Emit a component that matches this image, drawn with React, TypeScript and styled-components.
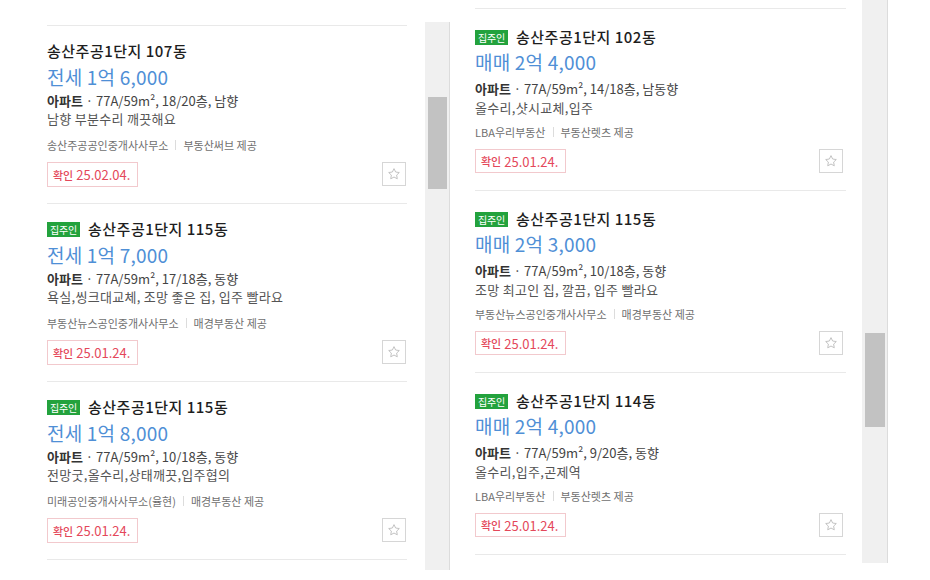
import React from "react";
import styled, { createGlobalStyle, ThemeProvider } from "styled-components";

const Global = createGlobalStyle`
  html, body { margin: 0; padding: 0; background: #fff; }
  body { font-family: "Noto Sans CJK KR", "Noto Sans", sans-serif; color: #222; }
  * { box-sizing: border-box; }
`;

type Metrics = {
  padTop: number;
  titleLh: number;
  priceGap: number;
  descGap: number;
  descLh: number;
  agentGap: number;
  footGap: number;
  boxH: number;
  padBottom: number;
  itemW: number;
  starInset: number;
};

const leftMetrics: Metrics = {
  padTop: 15, titleLh: 20, priceGap: 3, descGap: 2, descLh: 18,
  agentGap: 9, footGap: 9, boxH: 25, padBottom: 16, itemW: 360, starInset: 1,
};
const rightMetrics: Metrics = {
  padTop: 18, titleLh: 20, priceGap: 2, descGap: 4, descLh: 19,
  agentGap: 7, footGap: 9, boxH: 24, padBottom: 17, itemW: 371, starInset: 3,
};

declare module "styled-components" {
  export interface DefaultTheme { m: Metrics }
}

const Page = styled.div`
  display: flex;
  align-items: flex-start;
  width: 930px;
  height: 580px;
  overflow: hidden;
  background: #fff;
`;

const Pane = styled.section<{ $top: number; $h: number; $padLeft: number; $gap: number }>`
  display: flex;
  align-items: stretch;
  margin-top: ${(p) => p.$top}px;
  height: ${(p) => p.$h}px;
  padding-left: ${(p) => p.$padLeft}px;
  gap: ${(p) => p.$gap}px;
`;

const List = styled.ul<{ $padTop: number }>`
  list-style: none;
  margin: 0;
  padding: ${(p) => p.$padTop}px 0 0;
  width: ${(p) => p.theme.m.itemW}px;
  overflow: hidden;
`;

const ListEnd = styled.li`
  border-top: 1px solid #e9e9e9;
  height: 1px;
`;

const Item = styled.li`
  border-top: 1px solid #e9e9e9;
  padding: ${(p) => p.theme.m.padTop}px 0 ${(p) => p.theme.m.padBottom}px;
  display: flex;
  flex-direction: column;
`;

const TitleRow = styled.div`
  display: flex;
  align-items: center;
  gap: 8px;
  height: ${(p) => p.theme.m.titleLh}px;
`;

const OwnerTag = styled.span`
  display: inline-flex;
  align-items: center;
  justify-content: center;
  height: 15px;
  padding: 0 3px;
  background: #23a23d;
  color: #fff;
  font-size: 10px;
  line-height: 15px;
  letter-spacing: -0.2px;
`;

const Title = styled.h3`
  margin: 0;
  font-size: 15px;
  font-weight: 500;
  color: #1e1e1e;
  line-height: 20px;
  letter-spacing: 0.5px;
`;

const Price = styled.div`
  margin-top: ${(p) => p.theme.m.priceGap}px;
  font-size: 19px;
  line-height: 26px;
  color: #4f8fd6;
  letter-spacing: 0.2px;
`;

const Spec = styled.p`
  margin: ${(p) => p.theme.m.descGap}px 0 0;
  font-size: 13px;
  line-height: ${(p) => p.theme.m.descLh}px;
  color: #444;
  letter-spacing: 0;
  b { font-weight: 700; color: #333; }
`;

const Memo = styled.p`
  margin: 0;
  font-size: 13px;
  line-height: ${(p) => p.theme.m.descLh}px;
  color: #555;
  letter-spacing: 0.3px;
`;

const Agent = styled.div`
  margin-top: ${(p) => p.theme.m.agentGap}px;
  display: flex;
  align-items: center;
  font-size: 11px;
  line-height: 16px;
  color: #6f6f6f;
  letter-spacing: 0;
`;

const Sep = styled.span`
  display: inline-block;
  width: 1px;
  height: 10px;
  background: #dcdcdc;
  margin: 0 7px;
`;

const Footer = styled.div`
  margin-top: ${(p) => p.theme.m.footGap}px;
  display: flex;
  justify-content: space-between;
  align-items: flex-start;
  padding-right: ${(p) => p.theme.m.starInset}px;
`;

const Confirm = styled.span`
  display: inline-flex;
  align-items: center;
  height: ${(p) => p.theme.m.boxH}px;
  padding: 0 7px 0 5px;
  border: 1px solid #f2c9cd;
  color: #e4475a;
  font-size: 13px;
  letter-spacing: 0;
  em { font-style: normal; font-size: 11px; font-weight: 500; margin-right: 3px; }
`;

const StarBtn = styled.button`
  width: 24px;
  height: 24px;
  padding: 0;
  border: 1px solid #d6d6d6;
  background: #fff;
  display: flex;
  align-items: center;
  justify-content: center;
`;

const Track = styled.div<{ $w: number }>`
  width: ${(p) => p.$w}px;
  background: #f0f0f0;
  border-right: 1px solid #dcdcdc;
  display: flex;
  flex-direction: column;
  padding: 0 2px 0 3px;
`;

const Thumb = styled.div<{ $top: number; $h: number }>`
  margin-top: ${(p) => p.$top}px;
  height: ${(p) => p.$h}px;
  background: #c2c2c2;
`;

type Listing = {
  owner: boolean;
  title: string;
  price: string;
  spec: string;
  memo: string;
  agent: string;
  provider: string;
  date: string;
};

const left: Listing[] = [
  { owner: false, title: "송산주공1단지 107동", price: "전세 1억 6,000", spec: "77A/59m², 18/20층, 남향", memo: "남향 부분수리 깨끗해요", agent: "송산주공공인중개사사무소", provider: "부동산써브 제공", date: "25.02.04." },
  { owner: true, title: "송산주공1단지 115동", price: "전세 1억 7,000", spec: "77A/59m², 17/18층, 동향", memo: "욕실,씽크대교체, 조망 좋은 집, 입주 빨라요", agent: "부동산뉴스공인중개사사무소", provider: "매경부동산 제공", date: "25.01.24." },
  { owner: true, title: "송산주공1단지 115동", price: "전세 1억 8,000", spec: "77A/59m², 10/18층, 동향", memo: "전망굿,올수리,상태깨끗,입주협의", agent: "미래공인중개사사무소(율현)", provider: "매경부동산 제공", date: "25.01.24." },
];

const right: Listing[] = [
  { owner: true, title: "송산주공1단지 102동", price: "매매 2억 4,000", spec: "77A/59m², 14/18층, 남동향", memo: "올수리,샷시교체,입주", agent: "LBA우리부동산", provider: "부동산렛츠 제공", date: "25.01.24." },
  { owner: true, title: "송산주공1단지 115동", price: "매매 2억 3,000", spec: "77A/59m², 10/18층, 동향", memo: "조망 최고인 집, 깔끔, 입주 빨라요", agent: "부동산뉴스공인중개사사무소", provider: "매경부동산 제공", date: "25.01.24." },
  { owner: true, title: "송산주공1단지 114동", price: "매매 2억 4,000", spec: "77A/59m², 9/20층, 동향", memo: "올수리,입주,곤제역", agent: "LBA우리부동산", provider: "부동산렛츠 제공", date: "25.01.24." },
];

const StarIcon = () => (
  <svg width="14" height="14" viewBox="0 0 24 24" fill="none" stroke="#bdbdbd" strokeWidth="1.6" strokeLinejoin="round">
    <path d="M12 2.8l2.8 5.8 6.3.9-4.6 4.4 1.1 6.3L12 17.2l-5.6 3 1.1-6.3L2.9 9.5l6.3-.9z" />
  </svg>
);

const Card = ({ l }: { l: Listing }) => (
  <Item>
    <TitleRow>
      {l.owner && <OwnerTag>집주인</OwnerTag>}
      <Title>{l.title}</Title>
    </TitleRow>
    <Price>{l.price}</Price>
    <Spec>
      <b>아파트</b> · {l.spec}
    </Spec>
    <Memo>{l.memo}</Memo>
    <Agent>
      {l.agent}
      <Sep />
      {l.provider}
    </Agent>
    <Footer>
      <Confirm>
        <em>확인</em>
        {l.date}
      </Confirm>
      <StarBtn aria-label="관심">
        <StarIcon />
      </StarBtn>
    </Footer>
  </Item>
);

export default function App() {
  return (
    <>
      <Global />
      <Page>
        <ThemeProvider theme={{ m: leftMetrics }}>
          <Pane $top={22} $h={548} $padLeft={47} $gap={18}>
            <List $padTop={3}>
              {left.map((l, i) => (
                <Card key={i} l={l} />
              ))}
              <ListEnd />
            </List>
            <Track $w={25}>
              <Thumb $top={75} $h={92} />
            </Track>
          </Pane>
        </ThemeProvider>
        <ThemeProvider theme={{ m: rightMetrics }}>
          <Pane $top={0} $h={563} $padLeft={25} $gap={16}>
            <List $padTop={8}>
              {right.map((l, i) => (
                <Card key={i} l={l} />
              ))}
              <ListEnd />
            </List>
            <Track $w={26}>
              <Thumb $top={333} $h={94} />
            </Track>
          </Pane>
        </ThemeProvider>
      </Page>
    </>
  );
}
